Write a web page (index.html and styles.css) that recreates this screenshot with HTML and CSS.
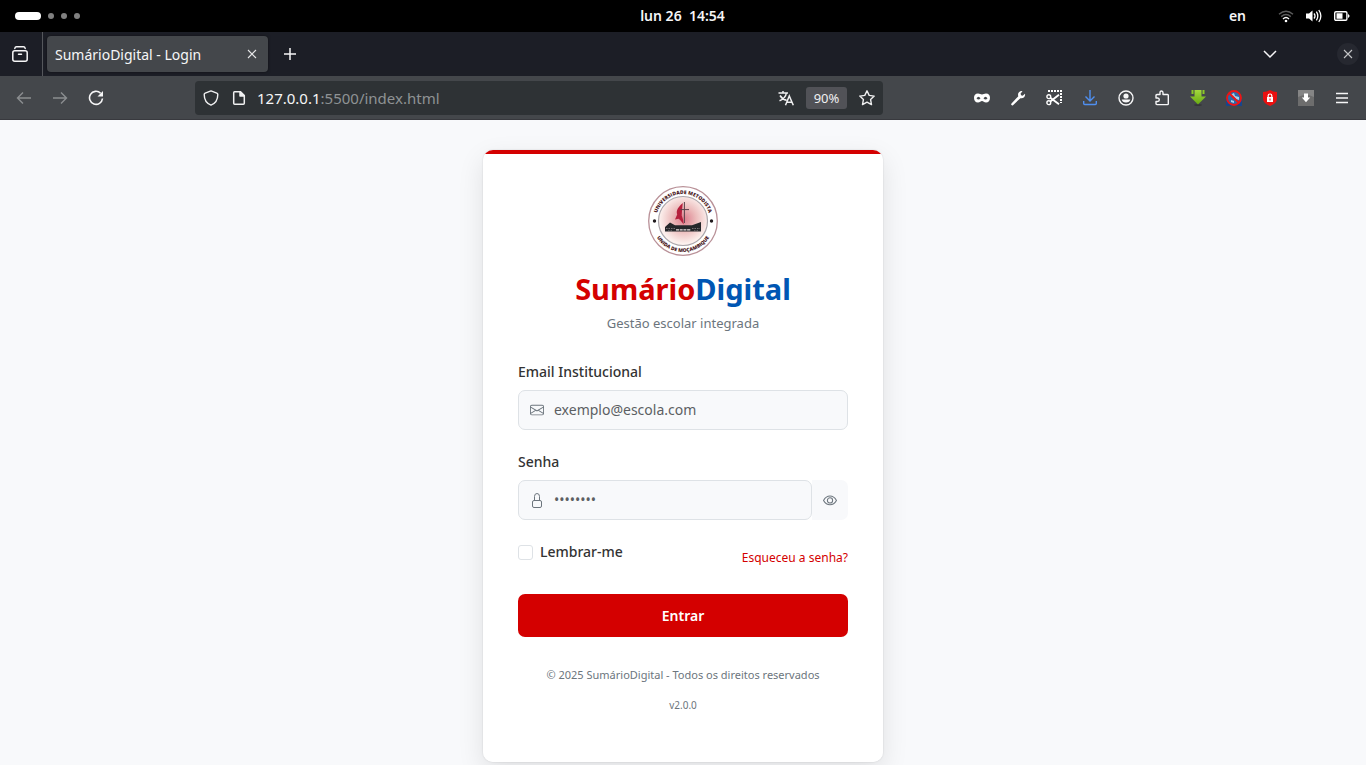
FILE: index.html
```html
<!DOCTYPE html>
<html lang="pt">
<head>
<meta charset="utf-8">
<meta name="viewport" content="width=device-width, initial-scale=1">
<title>SumárioDigital - Login</title>
<link rel="stylesheet" href="styles.css">
</head>
<body>
<header class="chrome">
  <div class="topbar">
    <div class="workspaces"><span class="pill"></span><span class="dot"></span><span class="dot"></span><span class="dot"></span></div>
    <time class="clock">lun 26&nbsp; 14:54</time>
    <div class="status">
      <span class="lang">en</span>
      <svg width="16" height="16" viewBox="0 0 16 16" fill="none" stroke="#fff" stroke-width="1.4"><path d="M1 6.2Q8 .2 15 6.2M3.2 8.6Q8 4.4 12.800 8.600" stroke="#5c5c5c"/><path d="M5 10.900Q8 8.200 11 10.900"/><circle cx="8" cy="13" r="1.300" fill="#fff" stroke="none"/></svg>
      <svg width="16" height="16" viewBox="0 0 16 16" fill="none" stroke="#fff" stroke-width="1.3"><path d="M0 5.500h3L6.500 2.500v11L3 10.500H0z" fill="#fff" stroke="none"/><path d="M8 5.500Q10 8 8 10.500M10.400 3.700Q13.200 8 10.400 12.300M12.800 2Q16.900 8 12.800 14"/></svg>
      <svg width="16" height="16" viewBox="0 0 16 16"><rect x=".7" y="3.700" width="12.200" height="8.600" rx="1.300" fill="none" stroke="#fff" stroke-width="1.400"/><path fill="#fff" d="M2.500 5.300h6v5.500h-6zM14 5.700l1.800 2.300-1.800 2.300z"/></svg>
    </div>
  </div>
  <div class="tabs">
    <button class="tool recent" aria-label="Recentes"><svg width="18" height="18" viewBox="0 0 18 18" fill="none" stroke="#f6f6f7" stroke-width="1.500" stroke-linecap="round"><rect x="1.800" y="5.800" width="14.400" height="10.400" rx="2"/><path d="M3.800 3.400Q4.200 1.800 5.500 1.800h7q1.300 0 1.700 1.600M7.500 9.300h3"/></svg></button>
    <div class="tab"><span class="tab-title">SumárioDigital - Login</span><button class="tab-close" aria-label="Fechar separador"><svg width="10" height="10" viewBox="0 0 10 10" stroke="#e6e6e7" stroke-width="1.100"><path d="M1 1l8 8M9 1L1 9"/></svg></button></div>
    <button class="new-tab" aria-label="Novo separador"><svg width="14" height="14" viewBox="0 0 14 14" stroke="#f6f6f7" stroke-width="1.500"><path d="M7 1v12M1 7h12"/></svg></button>
    <button class="tool list-tabs" aria-label="Listar separadores"><svg width="14" height="14" viewBox="0 0 14 14" fill="none" stroke="#f6f6f7" stroke-width="1.500"><path d="M1 4l6 6 6-6"/></svg></button>
    <button class="win-close" aria-label="Fechar janela"><svg width="10" height="10" viewBox="0 0 10 10" stroke="#c4c5c7" stroke-width="1.100"><path d="M1 1l8 8M9 1L1 9"/></svg></button>
  </div>
  <div class="toolbar">
    <button class="tool" aria-label="Recuar"><svg width="16" height="16" viewBox="0 0 16 16" fill="none" stroke="#8b8e90" stroke-width="1.400"><path d="M15 8H1.500M7 2.500L1.500 8 7 13.500"/></svg></button>
    <button class="tool" aria-label="Avançar"><svg width="16" height="16" viewBox="0 0 16 16" fill="none" stroke="#8b8e90" stroke-width="1.400"><path d="M1 8h13.500M9 2.500L14.500 8 9 13.500"/></svg></button>
    <button class="tool" aria-label="Recarregar"><svg width="16" height="16" viewBox="0 0 16 16" fill="none" stroke="#f6f6f7" stroke-width="1.600"><path d="M12.600 3.200A6.500 6.500 0 1 0 14.500 8.500"/><path d="M15 1v5.500H9.500z" fill="#f6f6f7" stroke="none"/></svg></button>
    <div class="urlbar">
      <svg width="16" height="16" viewBox="0 0 16 16" fill="none" stroke="#f0f0f1" stroke-width="1.400" stroke-linejoin="round"><path d="M8 .9l5.800 2.200q1 .4 1 1.500C14.800 9.500 12.500 13.500 8 15.200 3.500 13.500 1.200 9.500 1.200 4.600q0-1.100 1-1.500z"/></svg>
      <svg width="16" height="16" viewBox="0 0 16 16" fill="none" stroke="#f0f0f1" stroke-width="1.500" stroke-linejoin="round"><path d="M3.500 1.700h6L13.300 5.500v7.800q0 1-1 1H3.700q-1 0-1-1V2.700q0-1 .8-1z"/><path d="M9 1.700v4.200h4.200z" fill="#f0f0f1"/></svg>
      <span class="address" role="textbox" contenteditable="true" spellcheck="false" aria-label="Endereço"><span class="host">127.0.0.1</span>:5500/index.html</span>
      <svg width="16" height="16" viewBox="0 0 16 16" fill="none" stroke="#f0f0f1" stroke-width="1.500"><path d="M.5 3h9.500M5 1v2M2 5.500Q4.500 9.500 8.500 10.300M8.400 3Q7.500 8.500 1.500 10.800M7.500 15.200L11.300 6l4 9.200M8.900 12.300h5"/></svg>
      <button class="zoom">90%</button>
      <svg width="16" height="16" viewBox="0 0 16 16" fill="none" stroke="#f0f0f1" stroke-width="1.400" stroke-linejoin="round"><path d="M8 .8l2.200 4.600 5 .7-3.600 3.500.9 5L8 12.200l-4.500 2.400.9-5L.8 6.100l5-.7z"/></svg>
    </div>
    <button class="tool" aria-label="Máscara"><svg width="16" height="16" viewBox="0 0 16 16"><path fill="#fff" fill-rule="evenodd" d="M4 3.500C5.700 3.500 6.700 4.500 8 4.500s2.300-1 4-1c2.700 0 4 1.800 4 4.200 0 2.800-1.500 4.800-4 4.800-1.900 0-2.700-1.500-4-1.500s-2.100 1.500-4 1.500c-2.500 0-4-2-4-4.800C0 5.300 1.300 3.500 4 3.500zM2.500 8.200Q4.500 10.800 6.500 8.200 4.500 5.200 2.500 8.200zM9.500 8.200Q11.500 10.800 13.500 8.200 11.500 5.200 9.500 8.200z"/></svg></button>
    <button class="tool" aria-label="Ferramentas"><svg width="16" height="16" viewBox="0 0 16 16"><path fill="#fff" d="M12.500 1.200L10.600 3.600l.4 1.700 1.700.4 2.300-1.900q.4 2-.9 3.400-1.500 1.600-3.700 1L3 15.200q-.8.600-1.500-.1t0-1.500L8.300 6.200Q7.500 3.800 9 2.300q1.500-1.500 3.500-1.100z"/></svg></button>
    <button class="tool" aria-label="Captura"><svg width="16" height="16" viewBox="0 0 16 16" fill="none" stroke="#fff" stroke-width="1.400"><path d="M2 1H16" stroke-width="2" stroke-dasharray="2 1"/><path d="M15 3v10" stroke-width="2" stroke-dasharray="2 1"/><circle cx="2.800" cy="6.700" r="1.900"/><circle cx="2.800" cy="12.700" r="1.900"/><path d="M4.300 7.800l8.700 6.400M4.300 11.600L13 4.800" stroke-width="1.900"/></svg></button>
    <button class="tool" aria-label="Transferências"><svg width="16" height="16" viewBox="0 0 16 16" fill="none" stroke="#4f8ff0" stroke-width="1.400"><path d="M8 0v11M3.500 6.500L8 11l4.500-4.500M1.700 11v2.500q0 1 1 1h10.600q1 0 1-1V11"/></svg></button>
    <button class="tool" aria-label="Conta"><svg width="16" height="16" viewBox="0 0 16 16" fill="none" stroke="#f6f6f7" stroke-width="1.400"><circle cx="8" cy="8" r="7"/><circle cx="8" cy="6" r="2.600" fill="#f6f6f7" stroke="none"/><path d="M3.700 9.500h8.600q-.6 3-4.300 3t-4.300-3z" fill="#f6f6f7" stroke="none"/></svg></button>
    <button class="tool" aria-label="Extensões"><svg width="16" height="16" viewBox="0 0 16 16" fill="none" stroke="#f6f6f7" stroke-width="1.400" stroke-linejoin="round"><path d="M2 8V5.500q0-1 1-1h3V2.800Q6 1 7.500 1T9 2.800v1.700h4.500q.8 0 .8.800v8.500q0 .8-.8.800H3q-1 0-1-1V11.500h1.700Q5.300 11.500 5.300 9.800T3.700 8z"/></svg></button>
    <button class="tool" aria-label="Gestor de transferências"><svg width="16" height="16" viewBox="0 0 16 16"><defs><linearGradient id="leaf" x2="0" y2="1"><stop offset="0" stop-color="#a4d93d"/><stop offset="1" stop-color="#67a911"/></linearGradient></defs><ellipse cx="8" cy="15" rx="4" ry=".8" fill="#303234"/><path fill="url(#leaf)" d="M4.500 0h7v6.500H16L8 14.500 0 6.500h4.500z"/><path fill="#8bc926" d="M1.500 0h2v4H1.500zM12.500 0h2v4h-2z"/></svg></button>
    <button class="tool" aria-label="Bloqueio de imagens"><svg width="16" height="16" viewBox="0 0 16 16" fill="none"><path fill="#17468c" d="M0 9h16v7H0z"/><circle cx="8" cy="8" r="6.500" fill="#2d69a8"/><path fill="#a9d0e8" d="M4 5l4-2 1 3 4 1v3l-3-1-2-2zM5 10l3 1v2l-3-1z"/><circle cx="8" cy="8" r="7" stroke="#ee1515" stroke-width="1.800"/><path d="M3 3l10 10" stroke="#ee1515" stroke-width="2"/></svg></button>
    <button class="tool" aria-label="Segurança"><svg width="16" height="16" viewBox="0 0 16 16"><path fill="#ea1010" d="M8 0Q11 2 15 2v6q0 5.500-7 8-7-2.500-7-8V2Q5 2 8 0z"/><path fill="#fff" d="M5 7h6v5H5z"/><path d="M6.200 7.500V5.600Q6.200 4 8 4t1.800 1.600v1.900" fill="none" stroke="#fff" stroke-width="1.200"/><path fill="#ea1010" d="M7.500 8.500h1v2h-1z"/></svg></button>
    <button class="tool" aria-label="Descarregar"><svg width="16" height="16" viewBox="0 0 16 16"><path fill="#6d6d6d" d="M0 0h16v16H0z"/><path fill="#858585" d="M0 0h16v7Q8 3 0 7z"/><path fill="#fff" d="M6 3.500h4V7.500h2.200L8 12.300 3.800 7.500H6z"/></svg></button>
    <button class="tool" aria-label="Menu"><svg width="14" height="14" viewBox="0 0 14 14" stroke="#f6f6f7" stroke-width="1.400"><path d="M1 2.500h12M1 7h12M1 11.500h12"/></svg></button>
  </div>
</header>
<main class="page">
  <section class="card">
    <svg class="crest" width="70" height="70" viewBox="0 0 70 70" role="img" aria-label="Universidade Metodista Unida de Moçambique">
      <defs>
        <radialGradient id="glow" cx=".52" cy=".46" r=".5"><stop offset="0" stop-color="#dc7d8c"/><stop offset=".5" stop-color="#ecbdbd"/><stop offset="1" stop-color="#fcf1ee"/></radialGradient>
        <path id="arc-top" d="M8 35a27 27 0 0 1 54 0"/>
        <path id="arc-bottom" d="M4 35a31 31 0 0 0 62 0"/>
      </defs>
      <circle cx="35" cy="35" r="34.300" fill="#fff" stroke="#b99198" stroke-width="1.300"/>
      <circle cx="35" cy="35" r="24.500" fill="url(#glow)" stroke="#aba6ab" stroke-width="1.200"/>
      <text class="crest-text" text-anchor="middle"><textPath href="#arc-top" startOffset="50%">UNIVERSIDADE METODISTA</textPath></text>
      <text class="crest-text" text-anchor="middle"><textPath href="#arc-bottom" startOffset="50%">UNIDA DE MOÇAMBIQUE</textPath></text>
      <circle cx="6.500" cy="35" r="1.700" fill="#201a1d"/><circle cx="63.500" cy="35" r="1.700" fill="#201a1d"/>
      <path fill="#b51f3c" d="M34.800 17C28 23 28.500 26 29.200 28.500L27 33.500l3.500-.8q2 1 5.200 5.800-.2-5-2-9Q34 24 34.800 17z"/>
      <path d="M36.400 16v21M32.500 23.600h8.500" stroke="#584149" stroke-width="1" fill="none"/>
      <path fill="#25272a" d="M17 41l5-4.500 5 2.800h17l9-3.300v9.500H17z"/>
      <path d="M18 42.500h9M44 42.500h8M20 44.800h5M46 44.800h5" stroke="#989193" stroke-width=".7" stroke-dasharray="1.500 1"/>
      <path d="M28 43.800h15" stroke="#e9dfdf" stroke-width="1.300" stroke-dasharray="3 .7"/>
    </svg>
    <h1 class="brand">Sumário<span class="brand-alt">Digital</span></h1>
    <p class="tagline">Gestão escolar integrada</p>
    <form class="form">
      <label class="label" for="email">Email Institucional</label>
      <div class="field">
        <div class="box">
          <svg width="14" height="14" viewBox="0 0 16 16" fill="#6c757d"><path d="M0 4a2 2 0 0 1 2-2h12a2 2 0 0 1 2 2v8a2 2 0 0 1-2 2H2a2 2 0 0 1-2-2V4Zm2-1a1 1 0 0 0-1 1v.217l7 4.200 7-4.200V4a1 1 0 0 0-1-1H2Zm13 2.383-4.708 2.825L15 11.105V5.383Zm-.034 6.876-5.640-3.471L8 9.583l-1.326-.795-5.640 3.470A1 1 0 0 0 2 13h12a1 1 0 0 0 .966-.741ZM1 11.105l4.708-2.897L1 5.383v5.722Z"/></svg>
          <input class="input" id="email" type="email" placeholder="exemplo@escola.com">
        </div>
      </div>
      <label class="label" for="senha">Senha</label>
      <div class="field">
        <div class="box">
          <svg width="14" height="16" viewBox="0 0 14 16" fill="none" stroke="#6c757d" stroke-width="1"><rect x="2.500" y="8.500" width="9" height="7" rx="1.500"/><path d="M4.500 8.500V4.500Q4.500 1.500 7 1.500T9.500 4.500v4"/></svg>
          <input class="input" id="senha" type="password" placeholder="••••••••">
        </div>
        <button class="reveal" type="button" aria-label="Mostrar senha"><svg width="14" height="14" viewBox="0 0 16 16" fill="none" stroke="#6c757d" stroke-width="1.200"><path d="M.6 8.500Q3.500 3.500 8 3.500t7.400 5Q12.500 13.500 8 13.500T.6 8.500z"/><circle cx="8" cy="8.500" r="3"/></svg></button>
      </div>
      <div class="options">
        <label class="remember"><input class="check" type="checkbox">Lembrar-me</label>
        <a class="forgot" href="#">Esqueceu a senha?</a>
      </div>
      <button class="submit" type="submit">Entrar</button>
    </form>
    <footer class="foot">
      <p class="copyright">© 2025 SumárioDigital - Todos os direitos reservados</p>
      <p class="version">v2.0.0</p>
    </footer>
  </section>
</main>
</body>
</html>
```
FILE: styles.css
```css
* { box-sizing: border-box; }
body {
  margin: 0;
  height: 100vh;
  display: flex;
  flex-direction: column;
  overflow: hidden;
  background: #f8f9fb;
  font-family: "Noto Sans", "Open Sans", sans-serif;
  font-size: 14px;
}
button { font: inherit; border: 0; background: none; padding: 0; cursor: pointer; }
svg { display: block; flex: none; }
h1, p { margin: 0; }

.chrome { flex: none; color: #f6f6f7; }
.topbar {
  height: 32px;
  padding: 0 16px 0 15px;
  display: grid;
  grid-template-columns: 1fr auto 1fr;
  align-items: center;
  background: #000;
}
.workspaces { display: flex; align-items: center; gap: 7px; }
.pill { width: 26px; height: 8px; border-radius: 4px; background: #fff; }
.dot { width: 6px; height: 6px; border-radius: 50%; background: #808080; }
.clock, .lang { font-weight: 600; line-height: 20px; }
.status { display: flex; align-items: center; justify-content: flex-end; gap: 12px; }
.lang { margin-right: 20px; }

.tabs { height: 44px; display: flex; align-items: center; background: #1c1e26; padding-right: 7px; }
.tool { width: 36px; height: 36px; flex: none; display: grid; place-items: center; }
.recent { width: 43px; height: 44px; padding-right: 2px; border-right: 1px solid #55575c; }
.tab {
  width: 221px;
  height: 36px;
  margin-left: 4px;
  padding: 0 6px 0 8px;
  display: flex;
  align-items: center;
  justify-content: space-between;
  background: #44474b;
  border-radius: 4px;
  box-shadow: 0 0 3px rgba(0, 0, 0, .5);
}
.tab-close { width: 20px; height: 20px; display: grid; place-items: center; }
.new-tab { width: 28px; height: 28px; margin-left: 8px; display: grid; place-items: center; }
.list-tabs { margin-left: auto; }
.win-close {
  width: 22px;
  height: 22px;
  margin-left: 49px;
  display: grid;
  place-items: center;
  border-radius: 50%;
  background: #262830;
}

.toolbar {
  height: 44px;
  padding: 0 6px;
  display: flex;
  align-items: center;
  background: #44474b;
  border-bottom: 1px solid #38393e;
}
.urlbar {
  flex: 1;
  height: 34px;
  margin: 0 81px;
  padding: 0 8px;
  display: flex;
  align-items: center;
  gap: 12px;
  border-radius: 4px;
  background: #2e3235;
}
.address { flex: 1; min-width: 0; color: #8f9294; font-size: 15px; line-height: 24px; white-space: nowrap; outline: 0; margin-left: -2px; }
.host { color: #f6f6f7; }
.zoom { width: 41px; height: 22px; border-radius: 3px; background: #515257; color: #f0f0f1; font-size: 13px; line-height: 22px; }

.page { flex: 1; padding: 30px 16px 0; min-height: 0; }
.card {
  max-width: 400px;
  margin: 0 auto;
  padding: 36px 35px 49px;
  display: flex;
  flex-direction: column;
  align-items: center;
  border-radius: 10px;
  background: linear-gradient(#d40000 4px, #fff 4px);
  box-shadow: 0 0 2px rgba(0, 0, 0, .14), 0 9px 27px rgba(0, 0, 0, .1);
  color: #333;
}
.crest-text { font-family: "Open Sans", "Noto Sans", sans-serif; font-size: 5px; font-weight: 800; fill: #4b1822; }
.brand { margin-top: 12px; font-size: 29px; line-height: 42px; font-weight: 700; color: #d40000; }
.brand-alt { color: #0056b3; }
.tagline { margin-top: 3px; font-size: 13px; line-height: 20px; color: #6c757d; }
.form { width: 100%; margin-top: 29px; }
.label { display: block; margin-bottom: 8px; font-weight: 500; line-height: 20px; }
.field { display: flex; margin-bottom: 22px; }
.box {
  flex: 1;
  min-width: 0;
  height: 40px;
  padding: 0 11px;
  display: flex;
  align-items: center;
  gap: 10px;
  border: 1px solid #dee2e6;
  border-radius: 7px;
  background: #f8f9fb;
}
.input { flex: 1; min-width: 0; border: 0; padding: 0; outline: 0; background: none; font: inherit; line-height: 20px; color: #333; }
.input::placeholder { color: #5c5f63; opacity: 1; }
.reveal { width: 36px; display: grid; place-items: center; border-radius: 0 7px 7px 0; background: #f8f9fb; }
.options { display: flex; justify-content: space-between; align-items: flex-start; }
.remember { display: flex; align-items: center; gap: 7px; font-weight: 500; line-height: 20px; }
.check { appearance: none; width: 15px; height: 15px; margin: 0; border: 1px solid #dee2e6; border-radius: 3px; background: #fff; }
.check:checked { background: #d40000; }
.forgot { margin-top: 7px; font-size: 12px; line-height: 18px; color: #d40000; text-decoration: none; }
.submit { display: block; width: 100%; height: 43px; margin-top: 27px; border-radius: 7px; background: #d40000; color: #fff; font-weight: 600; }
.foot { margin-top: 28px; text-align: center; color: #6c757d; }
.copyright { font-size: 11px; line-height: 20px; }
.version { margin-top: 12px; font-size: 10px; line-height: 16px; }
```
